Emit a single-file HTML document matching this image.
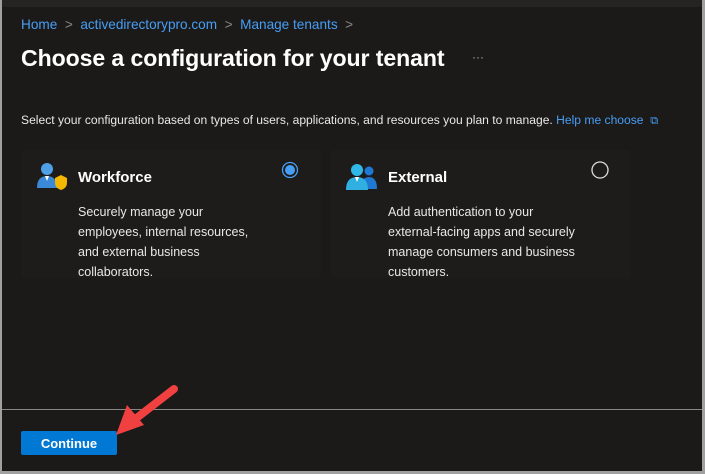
<!DOCTYPE html>
<html><head><style>
*{margin:0;padding:0;box-sizing:border-box}
body{width:705px;height:474px;background:#a0a0a0;font-family:"Liberation Sans",sans-serif;position:relative;overflow:hidden}
#f{position:absolute;left:2px;top:0;width:700px;height:471px;background:#1b1a19}
#top{position:absolute;left:0;top:0;width:700px;height:7px;background:#252423}
.a{position:absolute;white-space:nowrap}
.bc{top:17px;font-size:13.6px;color:#479ef5}
.sep{color:#8a8886}
h1{position:absolute;left:19px;top:45px;font-size:23.1px;font-weight:bold;color:#fff;white-space:nowrap;letter-spacing:-0.1px}
.card{position:absolute;top:150px;width:300px;height:128px;background:#1d1c1b;border-radius:4px}
.t{font-size:15px;font-weight:bold;color:#fff}
.d{font-size:12.5px;color:#e8e8e8;line-height:20px}
</style></head><body>
<div id="f">
<div id="top"></div>
<div class="a bc" style="left:19px">Home <span class="sep">&nbsp;&gt;&nbsp;</span> activedirectorypro.com <span class="sep">&nbsp;&gt;&nbsp;</span> Manage tenants <span class="sep">&nbsp;&gt;</span></div>
<h1>Choose a configuration for your tenant</h1>
<div class="a" style="left:470px;top:50px;color:#aaa;font-size:12px">···</div>
<div class="a" style="left:19px;top:113px;font-size:12.1px;color:#e8e8e8">Select your configuration based on types of users, applications, and resources you plan to manage. <span style="color:#479ef5">Help me choose</span> &nbsp;<span style="color:#479ef5;font-size:11px">⧉</span></div>
<div class="card" style="left:19px"></div>
<div class="card" style="left:329px"></div>
<svg class="a" style="left:35px;top:162px" width="32" height="30" viewBox="0 0 32 30">
<circle cx="10" cy="7" r="6" fill="#50a0e8"/><path d="M0 26 Q0 14 10 14 Q20 14 20 26Z" fill="#3a8ad8"/><path d="M8 14 L10 19 L12 14Z" fill="#fff"/>
<path d="M18 16 L24 13 L30 16 L30 21 Q30 26 24 28 Q18 26 18 21Z" fill="#f5b800"/></svg>
<div class="a t" style="left:76px;top:169px">Workforce</div>
<div class="a d" style="left:76px;top:202px">Securely manage your<br>employees, internal resources,<br>and external business<br>collaborators.</div>
<svg class="a" style="left:279px;top:161px" width="18" height="18"><circle cx="9" cy="9" r="7.5" fill="none" stroke="#479ef5" stroke-width="1.3"/><circle cx="9" cy="9" r="5" fill="#479ef5"/></svg>
<svg class="a" style="left:343px;top:163px" width="34" height="28" viewBox="0 0 34 28">
<circle cx="24" cy="8" r="4.5" fill="#1f78d1"/><path d="M16 26 Q16 14 24 14 Q32 14 32 26Z" fill="#1f78d1"/>
<circle cx="12" cy="7" r="6" fill="#30b8e8"/><path d="M1 27 Q1 14 12 14 Q23 14 23 27Z" fill="#30b0e0"/><path d="M10 14 L12 19 L14 14Z" fill="#fff"/></svg>
<div class="a t" style="left:386px;top:169px">External</div>
<div class="a d" style="left:386px;top:202px">Add authentication to your<br>external-facing apps and securely<br>manage consumers and business<br>customers.</div>
<svg class="a" style="left:589px;top:161px" width="18" height="18"><circle cx="9" cy="9" r="8" fill="none" stroke="#ddd" stroke-width="1.3"/></svg>
<div class="a" style="left:0;top:409px;width:700px;height:1px;background:#8a8886"></div>
<div class="a" style="left:19px;top:431px;width:96px;height:24px;background:#0078d4;border-radius:2px;color:#fff;font-size:13px;font-weight:bold;text-align:center;line-height:25px">Continue</div>
<svg class="a" style="left:100px;top:380px" width="90" height="70"><path d="M72 9 L32 40" stroke="#f04040" stroke-width="8" stroke-linecap="round"/><path d="M14 55 L25 25 L42 45Z" fill="#f04040"/></svg>
</div>
</body></html>
